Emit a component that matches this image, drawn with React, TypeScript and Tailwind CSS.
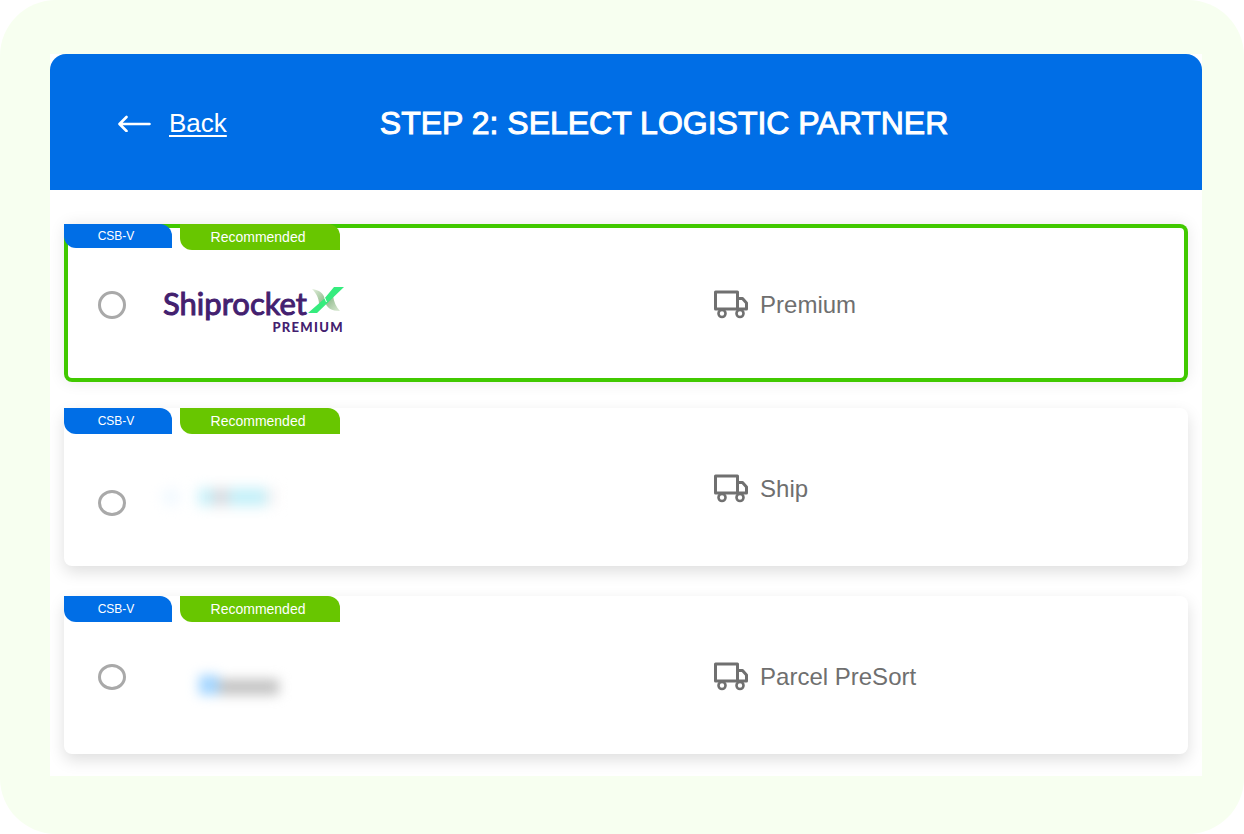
import type { ReactNode } from "react"

type Partner = {
  id: string
  label: string
  service: string
  logo: ReactNode
  highlighted?: boolean
  spacing: string
  radioClass: string
}

function ShiprocketLogo() {
  return (
    <span className="flex flex-col items-end text-[#43206f] font-[Lato,sans-serif]">
      <span className="flex items-end gap-px">
        <span className="text-[31px] leading-9 [-webkit-text-stroke:1px_#43206f]">Shiprocket</span>
        <svg width="36" height="26" viewBox="0 0 36 26" className="mb-2" aria-hidden="true">
          <defs>
            <linearGradient id="fadeTop" x1="0" y1="0" x2="1" y2="1">
              <stop offset="0" stopColor="#e3efdc" />
              <stop offset="1" stopColor="#86b583" />
            </linearGradient>
            <linearGradient id="fadeBottom" x1="0" y1="0" x2="1" y2="1">
              <stop offset="0" stopColor="#7fae7c" />
              <stop offset="1" stopColor="#dcebd5" />
            </linearGradient>
          </defs>
          <path d="M4 2C11 3 16 6 17 13L11 17C11 11 8 6 4 2Z" fill="url(#fadeTop)" />
          <path d="M25 9C26 15 28 20 32 24C24 24 18 21 17 14Z" fill="url(#fadeBottom)" />
          <path d="M26 0H36L9 26H0L16 12Z" fill="#35ec7e" />
          <path d="M16.5 10.5L18.5 15" stroke="#fff" strokeWidth="1" />
        </svg>
      </span>
      <span className="text-[13px] leading-3 font-black tracking-widest">PREMIUM</span>
    </span>
  )
}

function BlurredShipLogo() {
  return (
    <span className="flex items-center gap-5 blur-[7px]" aria-hidden="true">
      <span className="h-4 w-4 rounded-full bg-[#edf7ff]" />
      <span className="flex items-center">
        <span className="h-4 w-4 bg-[#bdeef8]" />
        <span className="h-4 w-3 bg-[#e0d0d4]" />
        <span className="h-4 w-10 bg-[#bdeef8]" />
        <span className="h-4 w-2 bg-[#f7efef]" />
      </span>
    </span>
  )
}

function BlurredParcelLogo() {
  return (
    <span className="ml-9 flex items-center blur-[6px]" aria-hidden="true">
      <span className="h-5 w-5 bg-[#a5d6ff]" />
      <span className="mt-1 h-4 w-15 bg-[#c4c4c4]" />
    </span>
  )
}

function TruckIcon() {
  return (
    <svg width="34" height="30" viewBox="0 0 34 30" fill="none" stroke="#707070" strokeWidth="3" strokeLinejoin="round" aria-hidden="true">
      <path d="M1.5 2H23.5V19H1.5Z" />
      <path d="M23.5 8.5H28.5L32.5 13V19H23.5" />
      <circle cx="8" cy="23.5" r="3.5" fill="#fff" strokeWidth="2.6" />
      <circle cx="26" cy="23.5" r="3.5" fill="#fff" strokeWidth="2.6" />
    </svg>
  )
}

const PARTNERS: Partner[] = [
  {
    id: "premium",
    label: "Shiprocket X Premium",
    service: "Premium",
    logo: <ShiprocketLogo />,
    highlighted: true,
    spacing: "mb-[26px]",
    radioClass: "h-7",
  },
  {
    id: "ship",
    label: "Ship",
    service: "Ship",
    logo: <BlurredShipLogo />,
    spacing: "mb-[30px]",
    radioClass: "h-[26px] mt-7",
  },
  {
    id: "parcel",
    label: "Parcel PreSort",
    service: "Parcel PreSort",
    logo: <BlurredParcelLogo />,
    spacing: "",
    radioClass: "h-[26px]",
  },
]

function PartnerCard({ partner }: { partner: Partner }) {
  const tagHeight = partner.highlighted ? "h-6" : "h-[26px]"
  const border = partner.highlighted ? "ring-4 ring-inset ring-[#41c900]" : ""
  const shadow = partner.highlighted
    ? "shadow-[0_0_16px_rgba(0,0,0,0.09)]"
    : "shadow-[0_6px_16px_rgba(0,0,0,0.13)]"

  return (
    <div className={`relative rounded-lg bg-white ${shadow} ${partner.spacing}`}>
      <div className={`rounded-lg ${border}`}>
        <div className="grid min-h-[158px] grid-cols-[13fr_10fr] items-center pl-[34px]">
          <div className="flex items-center gap-[37px] pt-[3px]">
            <input
              type="radio"
              name="partner"
              id={partner.id}
              aria-label={partner.label}
              className={`w-7 shrink-0 appearance-none rounded-[50%] border-3 border-[#a9a9a9] bg-white checked:bg-[#006ee6] ${partner.radioClass}`}
            />
            <label htmlFor={partner.id} className={partner.highlighted ? "pt-2" : "pt-4"}>
              {partner.logo}
            </label>
          </div>
          <div className="flex items-center gap-3 pt-1 text-2xl text-[#6f6f6f]">
            <TruckIcon />
            <span>{partner.service}</span>
          </div>
        </div>
      </div>

      {/* Tags sit over the card edge */}
      <div className="absolute top-0 left-0 flex items-start gap-2 text-white">
        <span className={`flex w-27 items-center justify-center rounded-tr-xl rounded-bl-xl bg-[#006ee6] pr-1 text-xs ${tagHeight}`}>
          CSB-V
        </span>
        <span className="flex h-[26px] w-40 items-center justify-center rounded-tr-xl rounded-bl-xl bg-[#68c600] pr-1 text-sm">
          Recommended
        </span>
      </div>
    </div>
  )
}

export default function App() {
  return (
    <div className="min-h-screen bg-white font-['Liberation_Sans',Arial,sans-serif]">
      <main className="min-h-screen rounded-[56px] bg-[#f7fff0] pt-[54px] pr-[42px] pb-[58px] pl-[50px]">
        <div className="bg-white">
          <header className="flex items-center rounded-t-2xl bg-[#006ee6] px-17 pt-[45px] pb-[43px] text-white">
            <a href="#back" className="flex items-center gap-[18px] text-[26px]">
              <svg width="33" height="18" viewBox="0 0 33 18" fill="none" stroke="currentColor" strokeWidth="2.6" strokeLinecap="round" strokeLinejoin="round" aria-hidden="true">
                <path d="M8.5 3L1.5 10L8.5 17M2 10H31.5" />
              </svg>
              <span className="underline decoration-2 underline-offset-3">Back</span>
            </a>
            <h1 className="ml-[153px] text-[32px] leading-12 [-webkit-text-stroke:1px_white]">
              STEP 2: SELECT LOGISTIC PARTNER
            </h1>
          </header>

          <section className="px-3.5 pt-[34px] pb-[22px]">
            {PARTNERS.map((partner) => (
              <PartnerCard key={partner.id} partner={partner} />
            ))}
          </section>
        </div>
      </main>
    </div>
  )
}
